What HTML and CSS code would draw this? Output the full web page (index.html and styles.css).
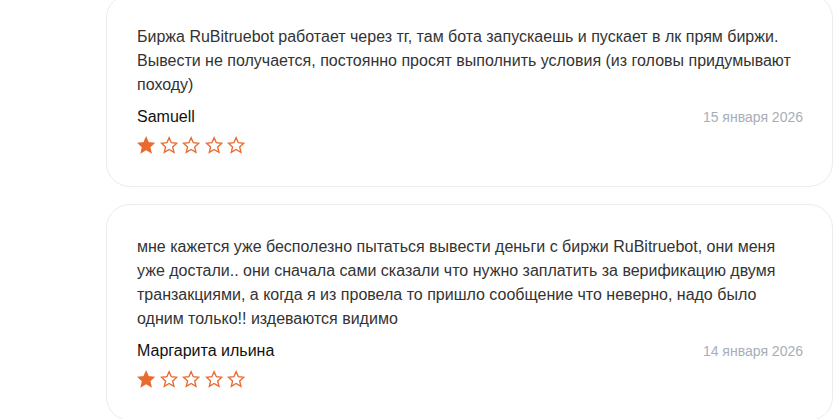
FILE: index.html
```html
<!DOCTYPE html>
<html lang="ru">
<head>
<meta charset="utf-8">
<title>Отзывы</title>
<link rel="stylesheet" href="styles.css">
</head>
<body>
<div class="reviews">
  <div class="card">
    <p class="text">Биржа RuBitruebot работает через тг, там бота запускаешь и пускает в лк прям биржи. Вывести не получается, постоянно просят выполнить условия (из головы придумывают походу)</p>
    <div class="meta">
      <span class="name">Samuell</span>
      <span class="date">15 января 2026</span>
    </div>
    <div class="stars">
      <svg class="star full" viewBox="0 0 24 24"><path d="M12 2.2l2.9 6.6 7.2.7-5.4 4.8 1.6 7.1L12 17.7l-6.3 3.7 1.6-7.1L1.9 9.5l7.2-.7z"/></svg>
      <svg class="star" viewBox="0 0 24 24"><path d="M12 2.2l2.9 6.6 7.2.7-5.4 4.8 1.6 7.1L12 17.7l-6.3 3.7 1.6-7.1L1.9 9.5l7.2-.7z"/></svg>
      <svg class="star" viewBox="0 0 24 24"><path d="M12 2.2l2.9 6.6 7.2.7-5.4 4.8 1.6 7.1L12 17.7l-6.3 3.7 1.6-7.1L1.9 9.5l7.2-.7z"/></svg>
      <svg class="star" viewBox="0 0 24 24"><path d="M12 2.2l2.9 6.6 7.2.7-5.4 4.8 1.6 7.1L12 17.7l-6.3 3.7 1.6-7.1L1.9 9.5l7.2-.7z"/></svg>
      <svg class="star" viewBox="0 0 24 24"><path d="M12 2.2l2.9 6.6 7.2.7-5.4 4.8 1.6 7.1L12 17.7l-6.3 3.7 1.6-7.1L1.9 9.5l7.2-.7z"/></svg>
    </div>
  </div>
  <div class="card">
    <p class="text">мне кажется уже бесполезно пытаться вывести деньги с биржи RuBitruebot, они меня уже достали.. они сначала сами сказали что нужно заплатить за верификацию двумя транзакциями, а когда я из провела то пришло сообщение что неверно, надо было одним только!! издеваются видимо</p>
    <div class="meta">
      <span class="name">Маргарита ильина</span>
      <span class="date">14 января 2026</span>
    </div>
    <div class="stars">
      <svg class="star full" viewBox="0 0 24 24"><path d="M12 2.2l2.9 6.6 7.2.7-5.4 4.8 1.6 7.1L12 17.7l-6.3 3.7 1.6-7.1L1.9 9.5l7.2-.7z"/></svg>
      <svg class="star" viewBox="0 0 24 24"><path d="M12 2.2l2.9 6.6 7.2.7-5.4 4.8 1.6 7.1L12 17.7l-6.3 3.7 1.6-7.1L1.9 9.5l7.2-.7z"/></svg>
      <svg class="star" viewBox="0 0 24 24"><path d="M12 2.2l2.9 6.6 7.2.7-5.4 4.8 1.6 7.1L12 17.7l-6.3 3.7 1.6-7.1L1.9 9.5l7.2-.7z"/></svg>
      <svg class="star" viewBox="0 0 24 24"><path d="M12 2.2l2.9 6.6 7.2.7-5.4 4.8 1.6 7.1L12 17.7l-6.3 3.7 1.6-7.1L1.9 9.5l7.2-.7z"/></svg>
      <svg class="star" viewBox="0 0 24 24"><path d="M12 2.2l2.9 6.6 7.2.7-5.4 4.8 1.6 7.1L12 17.7l-6.3 3.7 1.6-7.1L1.9 9.5l7.2-.7z"/></svg>
    </div>
  </div>
</div>
</body>
</html>
```
FILE: styles.css
```css
html, body {
  margin: 0;
  padding: 0;
  background: #ffffff;
}
body {
  font-family: "Liberation Sans", Arial, sans-serif;
  overflow: hidden;
}
.reviews {
  display: flex;
  flex-direction: column;
  gap: 17px;
  margin: -6px 1px 0 106px;
}
.card {
  border: 1px solid #ececec;
  border-radius: 24px;
  padding: 30px 29px 31px 30px;
  background: #fff;
}
.text {
  margin: 0;
  font-size: 16px;
  line-height: 24px;
  color: #333333;
}
.meta {
  display: flex;
  justify-content: space-between;
  align-items: center;
  margin-top: 8px;
  height: 24px;
}
.name {
  font-size: 16px;
  color: #111111;
}
.date {
  font-size: 14px;
  color: #a8aeb8;
}
.stars {
  display: flex;
  gap: 4.25px;
  margin-top: 6px;
  height: 20px;
  align-items: center;
}
.star {
  width: 18.25px;
  height: 18.25px;
  fill: #ffffff;
  stroke: #e96a2f;
  stroke-width: 1.8;
  stroke-linejoin: miter;
}
.star.full {
  fill: #e96a2f;
}
```
